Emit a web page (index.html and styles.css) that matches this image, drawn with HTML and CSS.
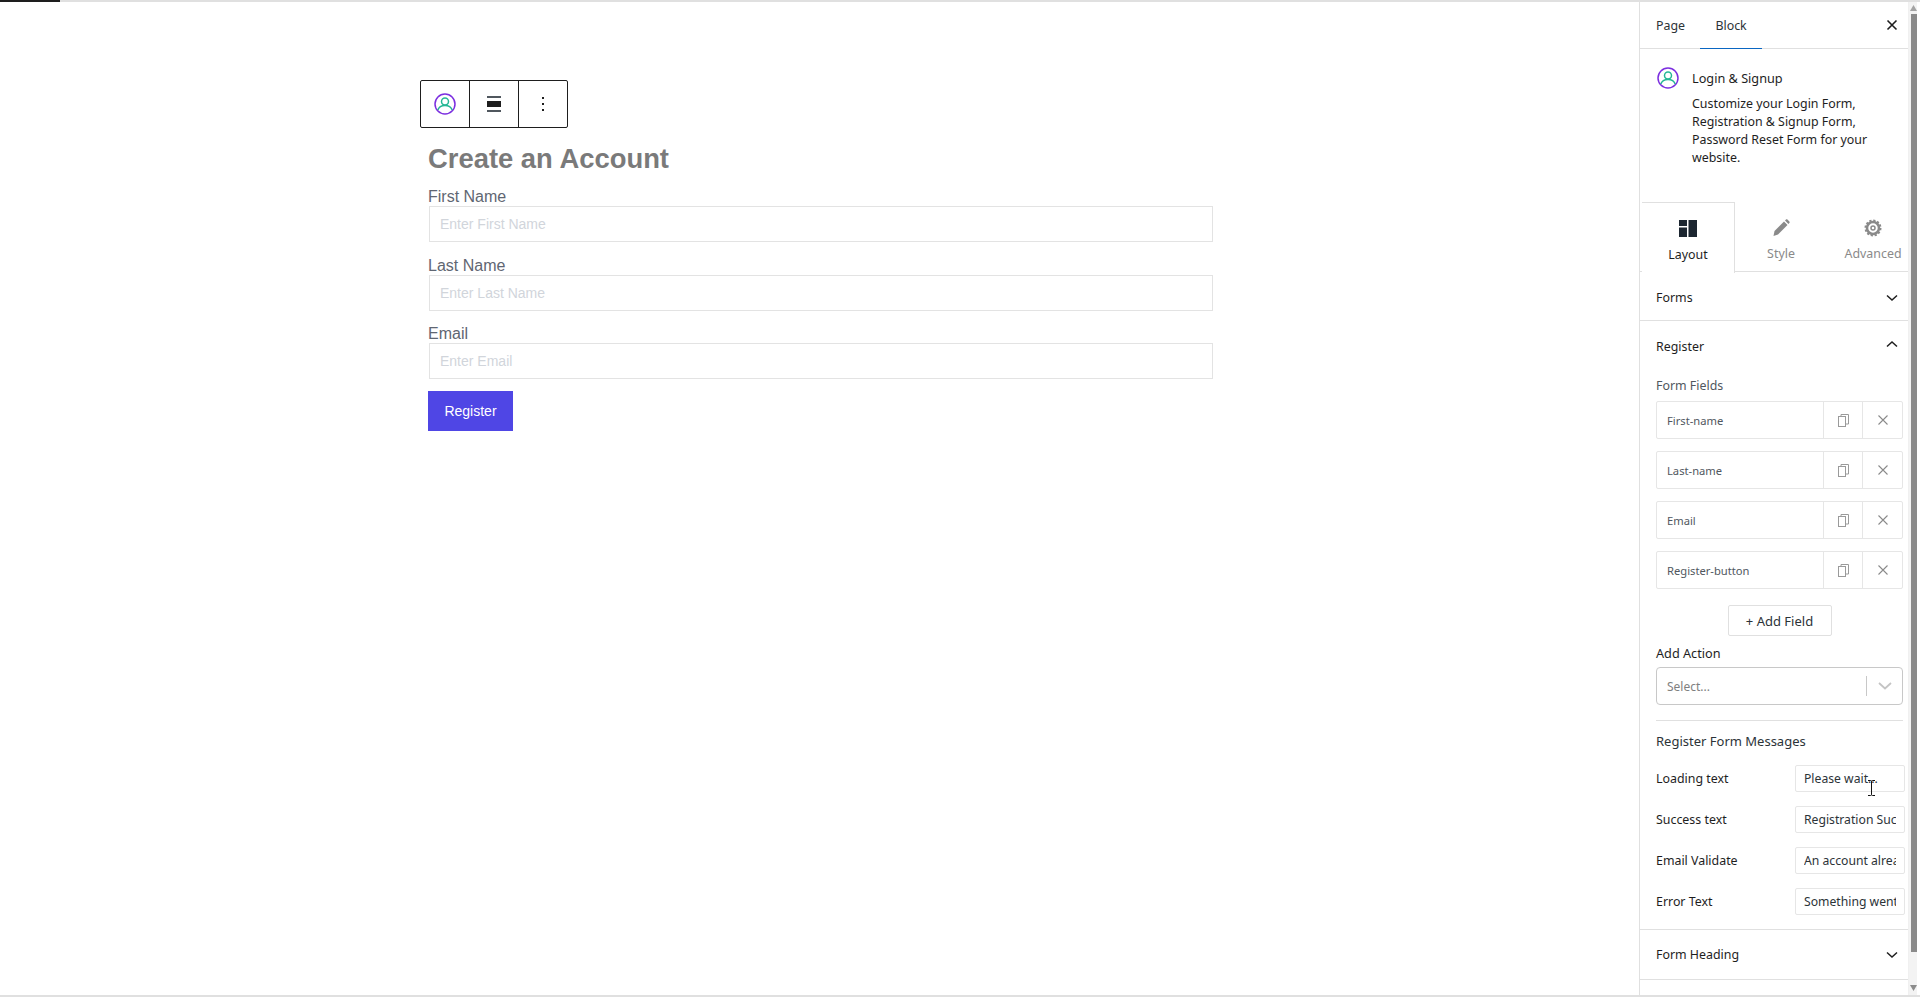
FILE: index.html
```html
<!DOCTYPE html>
<html lang="en">
<head>
<meta charset="UTF-8">
<title>Create an Account</title>
<link rel="stylesheet" href="styles.css">
</head>
<body>

<div class="progress"><div class="progress-done"></div></div>

<div class="workspace">

  <main class="canvas">
    <div class="toolbar">
      <div class="tool">
        <svg width="24" height="24" viewBox="0 0 24 24" fill="none">
          <circle cx="12" cy="12" r="10" stroke="#7c2fe0" stroke-width="1.5"/>
          <circle cx="12" cy="9.500" r="3.500" stroke="#25b795" stroke-width="1.5"/>
          <path d="M4.800 18c1-3 3.600-4.600 7.200-4.600s6.200 1.600 7.200 4.600" stroke="#25b795" stroke-width="1.5"/>
        </svg>
      </div>
      <div class="tool">
        <svg width="16" height="18" viewBox="0 0 16 18">
          <rect x="1" y="1" width="14" height="2" fill="#50575e"/>
          <rect x="1" y="6" width="14" height="6" fill="#1e1e1e"/>
          <rect x="1" y="15" width="14" height="2" fill="#50575e"/>
        </svg>
      </div>
      <div class="tool">
        <svg width="4" height="16" viewBox="0 0 4 16" fill="#1e1e1e">
          <rect x="1" y="1" width="2" height="2"/>
          <rect x="1" y="7" width="2" height="2"/>
          <rect x="1" y="13" width="2" height="2"/>
        </svg>
      </div>
    </div>

    <h1 class="form-title">Create an Account</h1>

    <div class="form-group">
      <label class="form-label">First Name</label>
      <input class="form-input" type="text" placeholder="Enter First Name">
    </div>
    <div class="form-group">
      <label class="form-label">Last Name</label>
      <input class="form-input" type="text" placeholder="Enter Last Name">
    </div>
    <div class="form-group">
      <label class="form-label">Email</label>
      <input class="form-input" type="text" placeholder="Enter Email">
    </div>
    <button class="register-button">Register</button>
  </main>

  <aside class="sidebar">
    <div class="sidebar-tabs">
      <div class="sidebar-tab">Page</div>
      <div class="sidebar-tab active">Block</div>
      <svg class="close" width="12" height="12" viewBox="0 0 12 12" stroke="#1e1e1e" stroke-width="1.6">
        <path d="M1.500 1.500l9 9M10.500 1.500l-9 9"/>
      </svg>
    </div>

    <div class="block-info">
      <svg class="block-icon" width="24" height="24" viewBox="0 0 24 24" fill="none">
        <circle cx="12" cy="12" r="10" stroke="#7c2fe0" stroke-width="1.5"/>
        <circle cx="12" cy="9.500" r="3.500" stroke="#25b795" stroke-width="1.5"/>
        <path d="M4.800 18c1-3 3.600-4.600 7.200-4.600s6.200 1.600 7.200 4.600" stroke="#25b795" stroke-width="1.5"/>
      </svg>
      <div>
        <div class="block-name">Login &amp; Signup</div>
        <p class="block-desc">Customize your Login Form, Registration &amp; Signup Form, Password Reset Form for your website.</p>
      </div>
    </div>

    <div class="panel-tabs">
      <div class="panel-tab active">
        <svg width="18" height="18" viewBox="0 0 18 18" fill="#1c2630">
          <rect x="0" y="0" width="8" height="6"/>
          <rect x="0" y="7.500" width="8" height="9.500"/>
          <rect x="9.500" y="0" width="8.500" height="17"/>
        </svg>
        <span>Layout</span>
      </div>
      <div class="panel-tab">
        <svg width="18" height="18" viewBox="0 0 18 18" fill="#8a8a8a">
          <path d="M1.500 17l1-5L12 2.500l3.500 3.500L6 15.500z"/>
          <path d="M13 1.500l1-1c.5-.4 1-.4 1.400 0l2 2c.4.4.4 1 0 1.400l-1 1z"/>
        </svg>
        <span>Style</span>
      </div>
      <div class="panel-tab">
        <svg width="18" height="18" viewBox="0 0 18 18" fill="none" stroke="#8a8a8a">
          <circle cx="9" cy="9" r="6" stroke-width="2.500"/>
          <circle cx="9" cy="9" r="7.500" stroke-width="2" stroke-dasharray="2.200 1.730"/>
          <circle cx="9" cy="9" r="2" stroke-width="1.500"/>
        </svg>
        <span>Advanced</span>
      </div>
    </div>

    <div class="section section-closed">
      <span>Forms</span>
      <svg class="chevron" width="12" height="8" viewBox="0 0 12 8" fill="none" stroke="#1e1e1e" stroke-width="1.500"><path d="M1 1.500l5 4.500 5-4.500"/></svg>
    </div>

    <div class="section-open">
      <div class="section-head">
        <span>Register</span>
        <svg class="chevron" width="12" height="8" viewBox="0 0 12 8" fill="none" stroke="#1e1e1e" stroke-width="1.500"><path d="M1 6.500l5-4.500 5 4.500"/></svg>
      </div>

      <div class="fields-title">Form Fields</div>
      <div class="field-list">
        <div class="field-row">
          <div class="field-name">First-name</div>
          <div class="field-btn"><svg width="11" height="13" viewBox="0 0 11 13" fill="none" stroke="#9a9a9a"><rect x="0.500" y="2.500" width="7" height="10"/><path d="M3 2.500V.5h7.500v9.500H7.500"/></svg></div>
          <div class="field-btn"><svg width="10" height="10" viewBox="0 0 10 10" stroke="#8a8a8a" stroke-width="1.100"><path d="M.5.5l9 9M9.500.5l-9 9"/></svg></div>
        </div>
        <div class="field-row">
          <div class="field-name">Last-name</div>
          <div class="field-btn"><svg width="11" height="13" viewBox="0 0 11 13" fill="none" stroke="#9a9a9a"><rect x="0.500" y="2.500" width="7" height="10"/><path d="M3 2.500V.5h7.500v9.500H7.500"/></svg></div>
          <div class="field-btn"><svg width="10" height="10" viewBox="0 0 10 10" stroke="#8a8a8a" stroke-width="1.100"><path d="M.5.5l9 9M9.500.5l-9 9"/></svg></div>
        </div>
        <div class="field-row">
          <div class="field-name">Email</div>
          <div class="field-btn"><svg width="11" height="13" viewBox="0 0 11 13" fill="none" stroke="#9a9a9a"><rect x="0.500" y="2.500" width="7" height="10"/><path d="M3 2.500V.5h7.500v9.500H7.500"/></svg></div>
          <div class="field-btn"><svg width="10" height="10" viewBox="0 0 10 10" stroke="#8a8a8a" stroke-width="1.100"><path d="M.5.5l9 9M9.500.5l-9 9"/></svg></div>
        </div>
        <div class="field-row">
          <div class="field-name">Register-button</div>
          <div class="field-btn"><svg width="11" height="13" viewBox="0 0 11 13" fill="none" stroke="#9a9a9a"><rect x="0.500" y="2.500" width="7" height="10"/><path d="M3 2.500V.5h7.500v9.500H7.500"/></svg></div>
          <div class="field-btn"><svg width="10" height="10" viewBox="0 0 10 10" stroke="#8a8a8a" stroke-width="1.100"><path d="M.5.5l9 9M9.500.5l-9 9"/></svg></div>
        </div>
      </div>

      <div class="add-field"><button class="add-field-button">+ Add Field</button></div>

      <div class="action-label">Add Action</div>
      <div class="action-select">
        <span class="action-placeholder">Select...</span>
        <span class="action-sep"></span>
        <svg width="14" height="8" viewBox="0 0 14 8" fill="none" stroke="#c4c4c4" stroke-width="1.800"><path d="M1 1l6 5.500L13 1"/></svg>
      </div>

      <div class="messages">
        <div class="messages-title">Register Form Messages</div>
        <div class="message-row">
          <span>Loading text</span>
          <input class="message-input" type="text" value="Please wait...">
        </div>
        <div class="message-row">
          <span>Success text</span>
          <input class="message-input" type="text" value="Registration Successful">
        </div>
        <div class="message-row">
          <span>Email Validate</span>
          <input class="message-input" type="text" value="An account already exists">
        </div>
        <div class="message-row">
          <span>Error Text</span>
          <input class="message-input" type="text" value="Something went wrong">
        </div>
      </div>
    </div>

    <div class="section section-closed section-last">
      <span>Form Heading</span>
      <svg class="chevron" width="12" height="8" viewBox="0 0 12 8" fill="none" stroke="#1e1e1e" stroke-width="1.500"><path d="M1 1.500l5 4.500 5-4.500"/></svg>
    </div>

    <!-- text cursor sitting over the loading text input -->
    <svg class="text-cursor" width="9" height="16" viewBox="0 0 9 16" fill="none" stroke="#111"><path d="M1 .5h2.500c.6 0 1 .4 1 1v13c0 .6-.4 1-1 1H1M8 .5H5.500c-.6 0-1 .4-1 1M8 15.500H5.500c-.6 0-1-.4-1-1"/></svg>
  </aside>

  <div class="scrollbar">
    <div class="scrollbar-track">
      <svg width="7" height="6" viewBox="0 0 7 6" fill="#a3a3a3"><path d="M3.500 0L7 6H0z"/></svg>
      <div class="scrollbar-thumb"></div>
      <svg width="7" height="6" viewBox="0 0 7 6" fill="#8c8c8c"><path d="M3.500 6L0 0h7z"/></svg>
    </div>
  </div>

</div>

<div class="bottom-line"></div>

</body>
</html>
```

FILE: styles.css
```css
* {
  box-sizing: border-box;
}

html, body {
  margin: 0;
  height: 100%;
}

body {
  display: flex;
  flex-direction: column;
  height: 998px;
  overflow: hidden;
  background-color: #fff;
  font-family: "Liberation Sans", Arial, sans-serif;
}

.progress {
  height: 2px;
  flex: none;
  background-color: #e0e0e0;
}

.progress-done {
  width: 60px;
  height: 2px;
  background-color: #1e1e1e;
}

.workspace {
  flex: 1;
  display: flex;
  min-height: 0;
}

.bottom-line {
  height: 2px;
  flex: none;
  margin-bottom: 1px;
  background-color: #e0e0e0;
}

/* Editor canvas */

.canvas {
  width: 1639px;
  flex: none;
  padding: 78px 0 0 428px;
}

.toolbar {
  display: flex;
  width: 148px;
  height: 48px;
  margin-left: -8px;
  border: 1px solid #1e1e1e;
  border-radius: 2px;
}

.tool {
  flex: 1;
  display: flex;
  align-items: center;
  justify-content: center;
  border-right: 1px solid #1e1e1e;
}

.tool:last-child {
  border-right: none;
}

.form-title {
  margin: 15px 0 13px;
  font-size: 27.4px;
  line-height: 32px;
  font-weight: 700;
  color: #7a7a7a;
}

.form-group {
  width: 785px;
  margin-top: 14.5px;
}

.form-title + .form-group {
  margin-top: 0;
}

.form-label {
  display: block;
  font-size: 16px;
  line-height: 18px;
  color: #5f6672;
}

.form-input {
  display: block;
  width: 784px;
  height: 36px;
  margin-left: 1px;
  padding: 0 10px;
  border: 1px solid #e3e3e3;
  font-family: inherit;
  font-size: 14px;
  outline: none;
}

.form-input::placeholder {
  color: #d1d5db;
  opacity: 1;
}

.register-button {
  display: block;
  width: 85px;
  height: 40px;
  margin-top: 12px;
  padding: 0;
  border: none;
  background-color: #4f46e5;
  color: #fff;
  font-family: inherit;
  font-size: 14px;
}

/* Settings sidebar */

.sidebar {
  position: relative;
  width: 270px;
  flex: none;
  border-left: 1px solid #e0e0e0;
  border-right: 1px solid #f0f0f0;
  font-family: "Noto Sans", sans-serif;
  font-size: 12.4px;
  color: #1e1e1e;
}

.sidebar-tabs {
  display: flex;
  align-items: center;
  height: 47px;
  border-bottom: 1px solid #e0e0e0;
}

.sidebar-tab {
  height: 47px;
  padding: 0 15px 0 16px;
  line-height: 48px;
  color: #2c3338;
}

.sidebar-tab.active {
  width: 62px;
  border-bottom: 1.500px solid #0a66c2;
  text-align: center;
  padding: 0;
}

.close {
  margin-left: auto;
  margin-right: 10px;
  margin-top: -1px;
}

.block-info {
  display: flex;
  gap: 12px;
  height: 153px;
  padding: 17px 16px 0 16px;
}

.block-icon {
  flex: none;
}

.block-name {
  margin-top: 3px;
  font-size: 12.7px;
  line-height: 18px;
}

.block-desc {
  margin: 8px 0 0;
  line-height: 18px;
}

.panel-tabs {
  display: flex;
  height: 70px;
  border-bottom: 1px solid #e0e0e0;
}

.panel-tab {
  flex: none;
  width: 92px;
  display: flex;
  flex-direction: column;
  align-items: center;
  padding-top: 17px;
  color: #8a8a8a;
}

.panel-tab span {
  margin-top: 8px;
  line-height: 17px;
}

.panel-tab.active {
  width: 93px;
  height: 71px;
  margin-left: 2px;
  border-top: 1px solid #e0e0e0;
  border-right: 1px solid #e0e0e0;
  background-color: #fff;
  color: #1e1e1e;
}

.section {
  display: flex;
  align-items: center;
  justify-content: space-between;
  padding: 0 10px 0 16px;
  border-bottom: 1px solid #e0e0e0;
}

.section-closed {
  height: 49px;
  padding-top: 3px;
}

.section-last {
  height: 50px;
  padding-top: 0;
}

.section-open {
  padding: 0 5px 0 16px;
  border-bottom: 1px solid #e0e0e0;
}

.section-head {
  display: flex;
  align-items: center;
  justify-content: space-between;
  height: 50px;
  padding-right: 5px;
}

.section-head .chevron {
  margin-top: -5px;
}

.fields-title {
  margin-top: 6px;
  line-height: 18px;
  color: #50575e;
}

.field-list {
  display: flex;
  flex-direction: column;
  gap: 12px;
  margin-top: 6px;
}

.field-row {
  display: flex;
  height: 38px;
  border: 1px solid #e6e6e6;
  border-radius: 2px;
}

.field-name {
  flex: 1;
  padding-left: 10px;
  line-height: 37px;
  font-size: 11.2px;
  color: #50575e;
}

.field-btn {
  flex: none;
  width: 39px;
  display: flex;
  align-items: center;
  justify-content: center;
  border-left: 1px solid #e6e6e6;
}

.field-btn:last-child {
  width: 40px;
}

.add-field {
  display: flex;
  justify-content: center;
  margin-top: 16px;
}

.add-field-button {
  width: 104px;
  height: 31px;
  padding: 0;
  border: 1px solid #e0e0e0;
  border-radius: 2px;
  background-color: #fff;
  font-family: inherit;
  font-size: 13px;
  color: #2c3338;
}

.action-label {
  margin-top: 8px;
  font-size: 12.7px;
  line-height: 18px;
}

.action-select {
  display: flex;
  align-items: center;
  height: 38px;
  margin-top: 5px;
  padding-left: 10px;
  border: 1px solid #c8c8c8;
  border-radius: 4px;
  font-size: 12px;
}

.action-placeholder {
  flex: 1;
  color: #7f7f7f;
}

.action-sep {
  width: 1px;
  height: 20px;
  margin-right: 11px;
  background-color: #c8c8c8;
}

.action-select svg {
  margin-right: 10px;
}

.messages {
  margin-top: 15px;
  padding: 11px 0 14px;
  border-top: 1px solid #e0e0e0;
}

.messages-title {
  font-size: 13px;
  line-height: 18px;
  color: #2c3338;
}

.message-row {
  display: flex;
  align-items: center;
  justify-content: space-between;
  height: 27px;
  margin-top: 14px;
}

.messages-title + .message-row {
  margin-top: 15px;
}

.message-input {
  width: 110px;
  height: 27px;
  margin-right: -2px;
  padding: 0 8px;
  border: 1px solid #e6e6e6;
  border-radius: 2px;
  font-family: inherit;
  font-size: 12.2px;
  color: #2c3338;
  outline: none;
}

.text-cursor {
  position: absolute;
  left: 227px;
  top: 778px;
}

/* Scrollbar */

.scrollbar {
  width: 11px;
  flex: none;
  padding-right: 3px;
}

.scrollbar-track {
  display: flex;
  flex-direction: column;
  align-items: flex-end;
  height: 100%;
  padding-top: 3px;
  padding-bottom: 4px;
  background-color: #f3f3f3;
}

.scrollbar-thumb {
  width: 6px;
  height: 938px;
  margin-top: 3px;
  margin-bottom: auto;
  background-color: #8a8a8a;
}
```
